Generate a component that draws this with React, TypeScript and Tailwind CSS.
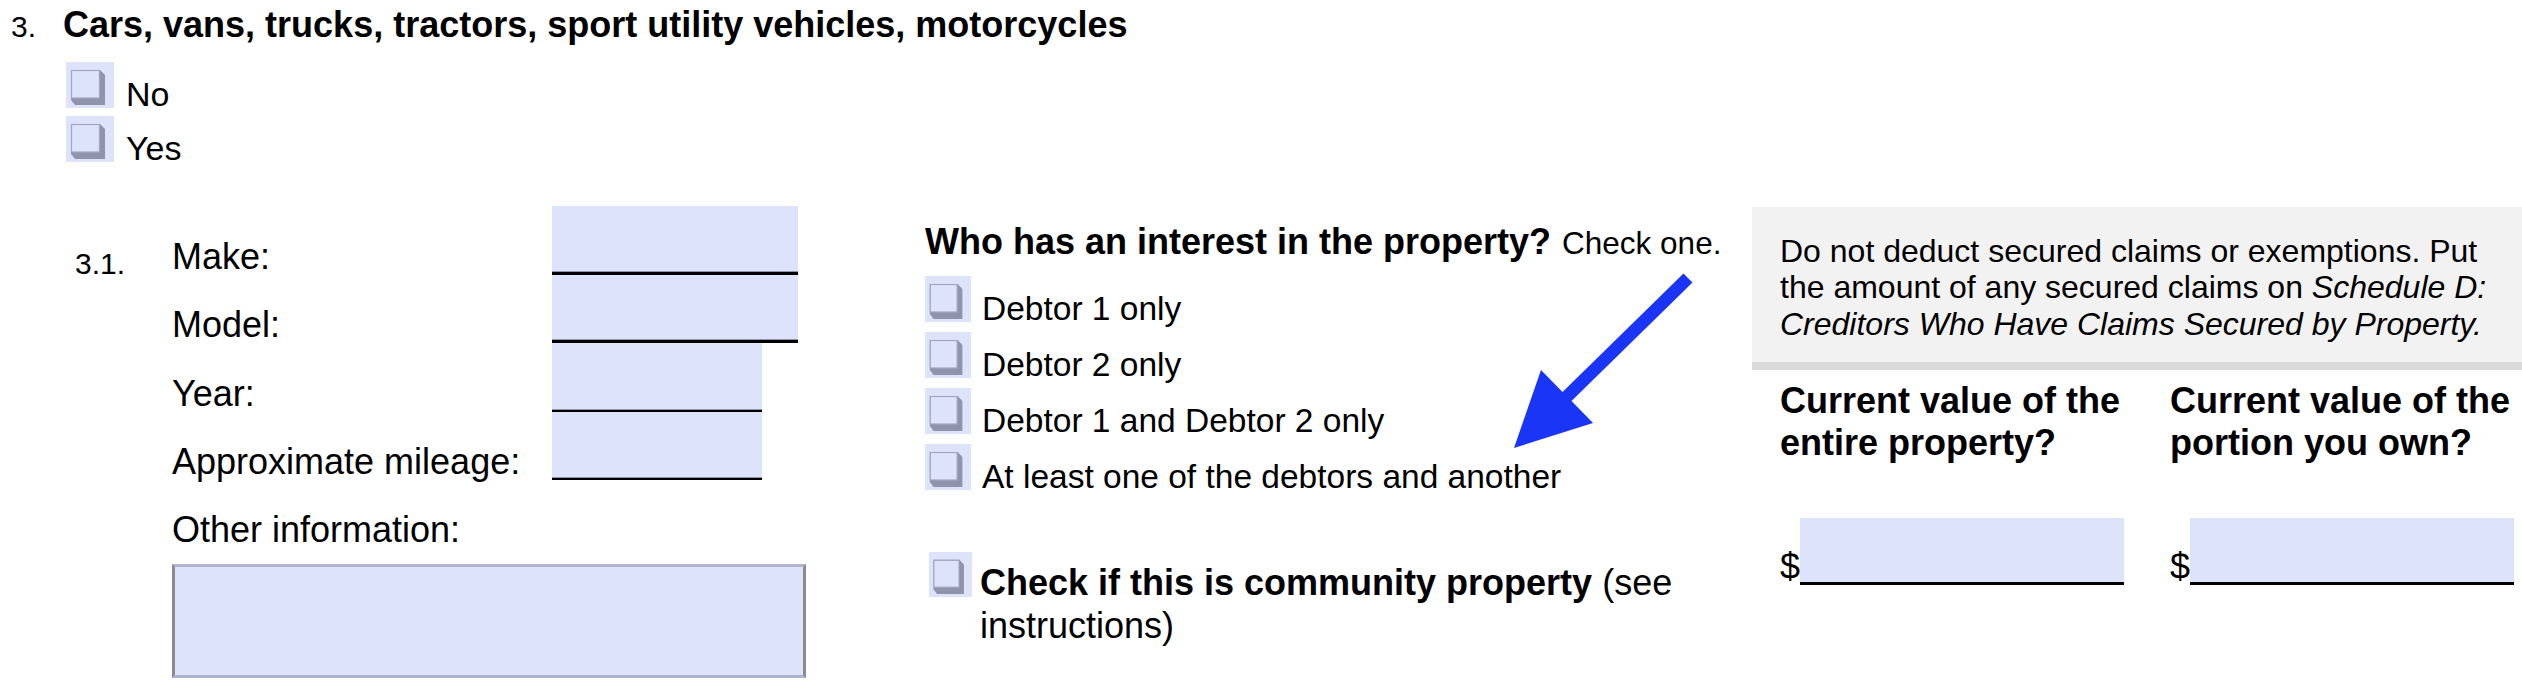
import React from 'react';

// --- checkbox desenhado como no PDF (caixa com sombra 3D) ---
const Box = ({ className = '' }: { className?: string }) => (
    <svg viewBox="0 0 48 46" preserveAspectRatio="none" className={`shrink-0 ${className}`}>
        <rect width="48" height="46" fill="#dde3fb" />
        <polygon points="5,8 34,8 39,13 39,43 9,43 5,38" fill="#8f93ac" />
        <rect x="5.5" y="8.5" width="28" height="27.5" fill="#dde3fb" stroke="#a3a7bd" strokeWidth="1.2" />
    </svg>
);

const Option = ({ label, box = 'w-[46px] h-[46px]', text = 'text-[33.5px]', gap = 'gap-[11px]' }: { label: string, box?: string, text?: string, gap?: string }) => (
    <div className={`flex items-end ${gap}`}>
        <Box className={box} />
        <span className={`${text} leading-none mb-[-3px] whitespace-nowrap`}>{label}</span>
    </div>
);

const FieldRow = ({ num, label, width, thick }: { num?: string, label: string, width: string, thick?: boolean }) => (
    <div className="flex items-end h-[68.5px]">
        <span className="w-[97px] text-[30px] leading-none mb-[-4px]">{num}</span>
        <span className="w-[380px] text-[36px] leading-none whitespace-nowrap">{label}</span>
        <div className={`${width} h-full bg-[#dde3fb] border-black shadow-[inset_0_-1px_0_#8e93ad] ${thick ? 'border-b-[3px]' : 'border-b-2'}`} />
    </div>
);

const MoneyField = () => (
    <div className="flex items-end">
        <span className="text-[36px] leading-none">$</span>
        <div className="w-[324px] h-[67px] bg-[#dde3fb] border-b-[3px] border-black" />
    </div>
);

export default function App() {
    return (
        <div className="relative w-[2522px] h-[692px] overflow-hidden bg-white text-black font-['Liberation_Sans',Arial,sans-serif]">
            {/* Título da questão */}
            <div className="flex items-baseline pt-[3px] pl-[11px] h-[47px]">
                <span className="w-[52px] text-[30px] leading-[44px]">3.</span>
                <h1 className="text-[36px] leading-[44px] font-bold whitespace-nowrap">Cars, vans, trucks, tractors, sport utility vehicles, motorcycles</h1>
            </div>

            <div className="pl-[66px] mt-[15px] flex flex-col gap-[8px]">
                <Option label="No" box="w-[48px] h-[46px]" text="text-[34px]" gap="gap-[12px]" />
                <Option label="Yes" box="w-[48px] h-[46px]" text="text-[34px]" gap="gap-[12px]" />
            </div>

            {/* 3.1 */}
            <div className="flex mt-[44px]">
                <div className="w-[925px] shrink-0 pl-[75px]">
                    <FieldRow num="3.1." label="Make:" width="w-[246px]" thick />
                    <FieldRow label="Model:" width="w-[246px]" thick />
                    <FieldRow label="Year:" width="w-[210px]" />
                    <FieldRow label="Approximate mileage:" width="w-[210px]" />
                    <p className="ml-[97px] mt-[31.5px] text-[36px] leading-none">Other information:</p>
                    <div className="ml-[97px] mt-[16.5px] w-[634px] h-[114px] bg-[#dde3fb] border-[3px] border-t-[#b0b4d0] border-b-[#b0b4d0] border-l-[#8c8c8c] border-r-[#8c8c8c]" />
                </div>

                <div className="w-[827px] shrink-0">
                    <div className="flex items-baseline pt-[17.5px]">
                        <span className="font-bold text-[36px] leading-none whitespace-nowrap">Who has an interest in the property?</span>
                        <span className="ml-[11px] text-[31.5px] leading-none whitespace-nowrap">Check one.</span>
                    </div>
                    <div className="mt-[16.5px] flex flex-col gap-[10px]">
                        <Option label="Debtor 1 only" />
                        <Option label="Debtor 2 only" />
                        <Option label="Debtor 1 and Debtor 2 only" />
                        <Option label="At least one of the debtors and another" />
                    </div>
                    <div className="mt-[62px] flex items-start">
                        <Box className="w-[43px] h-[45px] ml-[4px]" />
                        <p className="ml-[8px] mt-[9px] text-[36px] leading-[43px] whitespace-nowrap">
                            <span className="font-bold">Check if this is community property</span> <span>(see</span>
                            <br />
                            <span>instructions)</span>
                        </p>
                    </div>
                </div>

                <div className="flex-1">
                    <div className="mt-[1px] bg-[#f2f2f2] border-b-[8px] border-[#d9d9d9] pl-[28px] pt-[25.7px] pb-[20px] text-[32px] leading-[36.5px] whitespace-nowrap">
                        Do not deduct secured claims or exemptions. Put<br />
                        the amount of any secured claims on <i>Schedule D:</i><br />
                        <i>Creditors Who Have Claims Secured by Property.</i>
                    </div>
                    <div className="grid grid-cols-[390px_1fr] pl-[28px] mt-[9.5px] text-[36px] font-bold leading-[42px] whitespace-nowrap">
                        <p>Current value of the<br />entire property?</p>
                        <p>Current value of the<br />portion you own?</p>
                    </div>
                    <div className="grid grid-cols-[390px_1fr] pl-[28px] mt-[54.5px]">
                        <MoneyField />
                        <MoneyField />
                    </div>
                </div>
            </div>

            {/* seta azul sobreposta */}
            <svg className="absolute left-[1500px] top-[260px] w-[200px] h-[200px]" viewBox="0 0 200 200">
                <polygon points="183.5,13.4 192.5,22.6 71.5,141 93,163 14,188 41,110 62.5,131.9" fill="#1a35f5" />
            </svg>
        </div>
    );
}
